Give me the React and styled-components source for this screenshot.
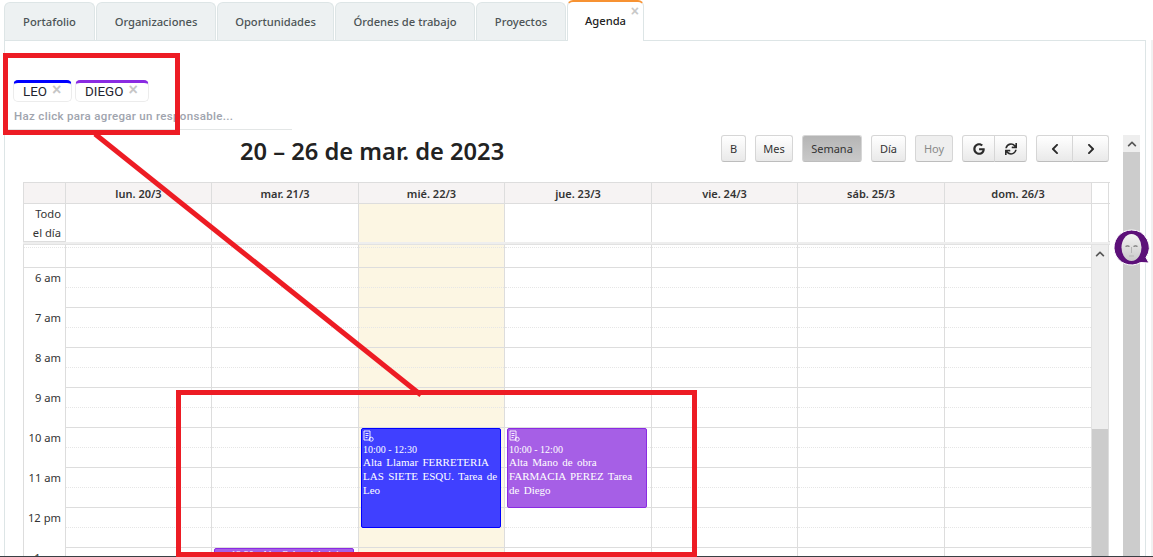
import React from "react";
import styled, { createGlobalStyle } from "styled-components";
import { FaChevronLeft, FaChevronRight, FaChevronUp, FaGoogle, FaSync } from "react-icons/fa";

const GlobalStyle = createGlobalStyle`
  html, body {
    margin: 0;
    padding: 0;
    background: #fff;
    overflow: hidden;
  }
  * {
    box-sizing: border-box;
  }
`;

const Page = styled.div`
  position: relative;
  width: 1153px;
  height: 557px;
  overflow: hidden;
  display: flex;
  flex-direction: column;
  font-family: "Noto Sans", "Liberation Sans", sans-serif;
  color: #333;
`;

const TabBar = styled.div`
  display: flex;
  height: 40px;
  padding-left: 4px;
  flex: none;
`;

const Tab = styled.div`
  position: relative;
  z-index: ${(p) => (p.$active ? 1 : 0)};
  width: ${(p) => p.$w}px;
  margin-right: 1px;
  margin-top: ${(p) => (p.$active ? 0 : 2)}px;
  height: ${(p) => (p.$active ? 41 : 38)}px;
  background: ${(p) => (p.$active ? "#fff" : "#edf1f2")};
  border: 1px solid #dde5e6;
  border-top: ${(p) => (p.$active ? "2px solid #f79232" : "1px solid #dde5e6")};
  border-bottom: none;
  border-radius: 6px 6px 0 0;
  display: flex;
  align-items: center;
  justify-content: center;
  padding-bottom: ${(p) => (p.$active ? 2 : 0)}px;
  font-size: 11.2px;
  font-weight: 500;
  color: ${(p) => (p.$active ? "#222" : "#4c5456")};
`;

const TabClose = styled.span`
  position: absolute;
  top: 2px;
  right: 4px;
  font-family: "Liberation Sans", sans-serif;
  font-size: 14px;
  line-height: 14px;
  font-weight: 700;
  color: #c8c8c8;
`;

const Main = styled.div`
  flex: 1;
  min-height: 0;
  display: flex;
`;

const Panel = styled.div`
  width: 1142px;
  margin-left: 4px;
  border-left: 1px solid #dde5e6;
  border-right: 1px solid #dde5e6;
  border-top: 1px solid #dde5e6;
  display: flex;
`;

const PageEdge = styled.div`
  flex: 1;
  margin-left: 5px;
  background: #f1f1f1;
`;

const Content = styled.div`
  width: 1118px;
  min-width: 0;
  display: flex;
  flex-direction: column;
`;

const Responsables = styled.div`
  height: 89px;
  width: 284px;
  margin-left: 3px;
  padding: 39px 0 0 5px;
  border-bottom: 1px solid #e3e6e6;
  flex: none;
`;

const ChipRow = styled.div`
  display: flex;
  gap: 3px;
`;

const Chip = styled.div`
  width: ${(p) => p.$w}px;
  height: 22px;
  padding: 0 0 2px 9px;
  border: 1px solid #ececec;
  border-top: 3px solid ${(p) => p.$color};
  border-radius: 5px;
  display: flex;
  align-items: center;
  gap: 5px;
  font-family: "Roboto", "Liberation Sans", sans-serif;
  font-size: 13.4px;
  color: #1f2430;
`;

const ChipClose = styled.span`
  font-family: "Liberation Sans", sans-serif;
  font-size: 16px;
  line-height: 12px;
  font-weight: 700;
  color: #c6c6c6;
  margin-top: -2px;
`;

const AddHint = styled.div`
  margin: 8px 0 0 1px;
  font-family: "Roboto", "Liberation Sans", sans-serif;
  font-size: 11.5px;
  font-weight: 500;
  line-height: 13px;
  letter-spacing: 0.33px;
  color: #a0a4ae;
`;

const Toolbar = styled.div`
  height: 47px;
  margin: 5px 0 0 18px;
  width: 1086px;
  padding-left: 217px;
  display: flex;
  justify-content: space-between;
  flex: none;
`;

const Title = styled.h2`
  margin: 0;
  font-size: 23.7px;
  line-height: 32px;
  font-weight: 600;
  color: #222;
`;

const ButtonRow = styled.div`
  display: flex;
  gap: 9px;
  height: 27px;
`;

const ButtonGroup = styled.div`
  display: flex;
`;

const Button = styled.div`
  width: ${(p) => p.$w}px;
  height: 27px;
  display: flex;
  align-items: center;
  justify-content: center;
  font-size: 11px;
  color: ${(p) => (p.$off ? "#8a8a8a" : "#333")};
  background: ${(p) =>
    p.$on
      ? "linear-gradient(#b5b5b5, #c9c9c9)"
      : p.$off
        ? "#efefef"
        : "linear-gradient(#fff, #e9e9e9)"};
  border: 1px solid #d6d6d6;
  border-bottom-color: #bdbdbd;
  border-radius: ${(p) => p.$radius || "3px"};
  margin-left: ${(p) => (p.$joined ? "-1px" : 0)};
  svg {
    font-size: 12px;
    color: #2b2b2b;
  }
`;

const Calendar = styled.div`
  margin-left: 18px;
  width: 1087px;
  flex: 1;
  min-height: 0;
  display: flex;
  flex-direction: column;
  overflow: hidden;
`;

const COLUMNS = "42px 146px 147px 146px 147px 146px 147px 147px 18px";

const HeaderRow = styled.div`
  display: grid;
  grid-template-columns: ${COLUMNS};
  height: 22px;
  flex: none;
  border-top: 1px solid #ddd;
  border-bottom: 1px solid #ddd;
`;

const HeaderCell = styled.div`
  background: ${(p) => (p.$blank ? "#fff" : "#f6f3f3")};
  border-left: 1px solid #ddd;
  border-right: ${(p) => (p.$blank ? "1px solid #ddd" : "none")};
  display: flex;
  align-items: center;
  justify-content: center;
  font-size: 11px;
  font-weight: 600;
  color: #333;
`;

const AllDayRow = styled.div`
  display: grid;
  grid-template-columns: ${COLUMNS};
  height: 38px;
  flex: none;
  border-bottom: 1px solid #ddd;
`;

const AllDayCell = styled.div`
  background: ${(p) => (p.$today ? "#fcf6e3" : "#fff")};
  border-left: 1px solid #ddd;
  border-right: ${(p) => (p.$last ? "1px solid #ddd" : "none")};
`;

const AllDayLabel = styled.div`
  border-left: 1px solid #ddd;
  padding-right: 4px;
  text-align: right;
  font-size: 11.2px;
  line-height: 19px;
  color: #333;
`;

const Divider = styled.div`
  height: 3px;
  flex: none;
  background: #eee;
  border-bottom: 1px solid #e2e2e2;
`;

const BodyGrid = styled.div`
  display: grid;
  grid-template-columns: ${COLUMNS};
  flex: 1;
  min-height: 0;
  overflow: hidden;
`;

const TimeColumn = styled.div`
  border-left: 1px solid #ddd;
`;

const DayColumn = styled.div`
  position: relative;
  border-left: 1px solid #ddd;
  background: ${(p) => (p.$today ? "#fcf6e3" : "#fff")};
`;

const SlotTop = styled.div`
  height: 3px;
  border-bottom: 1px dotted #e6e6e6;
`;

const Slot = styled.div`
  height: 20px;
  border-bottom: ${(p) => (p.$half ? "1px dotted #e6e6e6" : "1px solid #ddd")};
`;

const TimeSlot = styled.div`
  height: 40px;
  padding: 2px 4px 0 0;
  text-align: right;
  font-size: 11.2px;
  line-height: 15px;
  color: #333;
`;

const Event = styled.div`
  position: absolute;
  left: ${(p) => p.$left}px;
  top: ${(p) => p.$top}px;
  width: 140px;
  height: ${(p) => p.$h}px;
  padding: 1px;
  background: ${(p) => p.$bg};
  border: 1px solid ${(p) => p.$border};
  border-radius: 2px;
  font-family: "Liberation Serif", serif;
  color: #fff;
`;

const EventIcon = styled.svg`
  display: block;
  width: 11px;
  height: 12px;
  margin-bottom: 1px;
`;

const EventTime = styled.div`
  font-size: 10px;
  line-height: 13px;
`;

const EventTitle = styled.div`
  font-size: 11px;
  line-height: 14px;
  word-spacing: 1.6px;
  margin-top: -1px;
`;

const CompactEvent = styled(EventTime)`
  white-space: nowrap;
  overflow: hidden;
  line-height: 11px;
  padding-left: 15px;
  margin-top: -1px;
`;

const InnerScroll = styled.div`
  display: flex;
  flex-direction: column;
  border-left: 1px solid #e2e2e2;
  border-right: 1px solid #ddd;
  background: #eee;
`;

const ScrollArrow = styled.div`
  height: 17px;
  flex: none;
  display: flex;
  align-items: center;
  justify-content: center;
  background: #eee;
  svg {
    font-size: 10px;
    color: #555;
  }
`;

const ScrollThumb = styled.div`
  flex: 1;
  margin-top: ${(p) => p.$top}px;
  background: #ccc;
`;

const OuterScroll = styled.div`
  width: 17px;
  margin: 94px 0 0 0;
  display: flex;
  flex-direction: column;
`;

const Footer = styled.div`
  height: 1px;
  flex: none;
  background: #3a3f44;
`;

const Annotation = styled.svg`
  position: absolute;
  left: 0;
  top: 0;
  pointer-events: none;
`;

const Bot = styled.svg`
  position: absolute;
  left: 1113px;
  top: 229px;
`;

const tabs = [
  { label: "Portafolio", w: 91 },
  { label: "Organizaciones", w: 120 },
  { label: "Oportunidades", w: 117 },
  { label: "Órdenes de trabajo", w: 140 },
  { label: "Proyectos", w: 90 },
];

const days = ["lun. 20/3", "mar. 21/3", "mié. 22/3", "jue. 23/3", "vie. 24/3", "sáb. 25/3", "dom. 26/3"];
const hours = ["6 am", "7 am", "8 am", "9 am", "10 am", "11 am", "12 pm", "1 pm"];
const TODAY = 2;

const TaskIcon = () => (
  <EventIcon viewBox="0 0 11 12" fill="none" stroke="#fff" strokeWidth="0.9">
    <path d="M1 1h6v9H1z" />
    <path d="M2.5 3.5h3M2.5 5.5h3M2.5 7.5h2" />
    <circle cx="8.2" cy="9.2" r="2" />
  </EventIcon>
);

const DaySlots = () => (
  <>
    <SlotTop />
    {hours.map((h) => (
      <React.Fragment key={h}>
        <Slot />
        <Slot $half />
      </React.Fragment>
    ))}
  </>
);

export default function App() {
  return (
    <Page>
      <GlobalStyle />
      <TabBar>
        {tabs.map((t) => (
          <Tab key={t.label} $w={t.w}>
            {t.label}
          </Tab>
        ))}
        <Tab $active $w={77}>
          Agenda
          <TabClose>×</TabClose>
        </Tab>
      </TabBar>
      <Main>
        <Panel>
          <Content>
            <Responsables>
              <ChipRow>
                <Chip $w={59} $color="#0000ff">
                  LEO
                  <ChipClose>×</ChipClose>
                </Chip>
                <Chip $w={74} $color="#8a2be2">
                  DIEGO
                  <ChipClose>×</ChipClose>
                </Chip>
              </ChipRow>
              <AddHint>Haz click para agregar un responsable...</AddHint>
            </Responsables>
            <Toolbar>
              <Title>20 – 26 de mar. de 2023</Title>
              <ButtonRow>
                <Button $w={25}>B</Button>
                <Button $w={38}>Mes</Button>
                <Button $w={60} $on>
                  Semana
                </Button>
                <Button $w={35}>Día</Button>
                <Button $w={38} $off>
                  Hoy
                </Button>
                <ButtonGroup>
                  <Button $w={33} $radius="3px 0 0 3px">
                    <FaGoogle />
                  </Button>
                  <Button $w={33} $joined $radius="0 3px 3px 0">
                    <FaSync />
                  </Button>
                </ButtonGroup>
                <ButtonGroup>
                  <Button $w={37} $radius="3px 0 0 3px">
                    <FaChevronLeft />
                  </Button>
                  <Button $w={37} $joined $radius="0 3px 3px 0">
                    <FaChevronRight />
                  </Button>
                </ButtonGroup>
              </ButtonRow>
            </Toolbar>
            <Calendar>
              <HeaderRow>
                <HeaderCell />
                {days.map((d) => (
                  <HeaderCell key={d}>{d}</HeaderCell>
                ))}
                <HeaderCell $blank />
              </HeaderRow>
              <AllDayRow>
                <AllDayLabel>
                  Todo
                  <br />
                  el día
                </AllDayLabel>
                {days.map((d, i) => (
                  <AllDayCell key={d} $today={i === TODAY} />
                ))}
                <AllDayCell $last />
              </AllDayRow>
              <Divider />
              <BodyGrid>
                <TimeColumn>
                  <SlotTop />
                  <Slot />
                  {hours.map((h) => (
                    <TimeSlot key={h}>{h}</TimeSlot>
                  ))}
                </TimeColumn>
                {days.map((d, i) => (
                  <DayColumn key={d} $today={i === TODAY}>
                    <DaySlots />
                    {i === 1 && (
                      <Event $left={2} $top={303} $h={40} $bg="#a65fe6" $border="#8a2be2">
                        <CompactEvent>12:30 - Alta Cobro Administración M</CompactEvent>
                      </Event>
                    )}
                    {i === 2 && (
                      <Event $left={2} $top={183} $h={100} $bg="#4040ff" $border="#0000ff">
                        <TaskIcon />
                        <EventTime>10:00 - 12:30</EventTime>
                        <EventTitle>Alta Llamar FERRETERIA LAS SIETE ESQU. Tarea de Leo</EventTitle>
                      </Event>
                    )}
                    {i === 3 && (
                      <Event $left={2} $top={183} $h={80} $bg="#a65fe6" $border="#8a2be2">
                        <TaskIcon />
                        <EventTime>10:00 - 12:00</EventTime>
                        <EventTitle>Alta Mano de obra FARMACIA PEREZ Tarea de Diego</EventTitle>
                      </Event>
                    )}
                  </DayColumn>
                ))}
                <InnerScroll>
                  <ScrollArrow>
                    <FaChevronUp />
                  </ScrollArrow>
                  <ScrollThumb $top={167} />
                </InnerScroll>
              </BodyGrid>
            </Calendar>
          </Content>
          <OuterScroll>
            <ScrollArrow>
              <FaChevronUp />
            </ScrollArrow>
            <ScrollThumb $top={0} />
          </OuterScroll>
        </Panel>
        <PageEdge />
      </Main>
      <Footer />
      <Bot width="40" height="40" viewBox="0 0 40 40">
        <defs>
          <linearGradient id="mask" x1="0" y1="0" x2="0" y2="1">
            <stop offset="0" stopColor="#f4f4f4" />
            <stop offset="1" stopColor="#c9c9c9" />
          </linearGradient>
        </defs>
        <path
          d="M18.5 1a17.5 17.5 0 1 0 9 32.5l8.500 0.500-3-5.500A17.500 17.500 0 0 0 18.500 1z"
          fill="#5c1079"
          stroke="#fff"
          strokeWidth="1"
        />
        <ellipse cx="18.500" cy="18.500" rx="10" ry="13.500" fill="url(#mask)" />
        <path d="M12.500 17.500q2-1.200 4 0M20.500 17.500q2-1.200 4 0" stroke="#777" strokeWidth="1.200" fill="none" />
        <path d="M18.500 18v6M16 27h5" stroke="#b5b5b5" strokeWidth="1" fill="none" />
      </Bot>
      <Annotation width="1153" height="557" fill="none" stroke="#ed1c24" strokeWidth="5">
        <rect x="5.500" y="55.500" width="172" height="77" />
        <rect x="178.500" y="392.500" width="516" height="162" />
        <path d="M95 134L421 395" />
      </Annotation>
    </Page>
  );
}
